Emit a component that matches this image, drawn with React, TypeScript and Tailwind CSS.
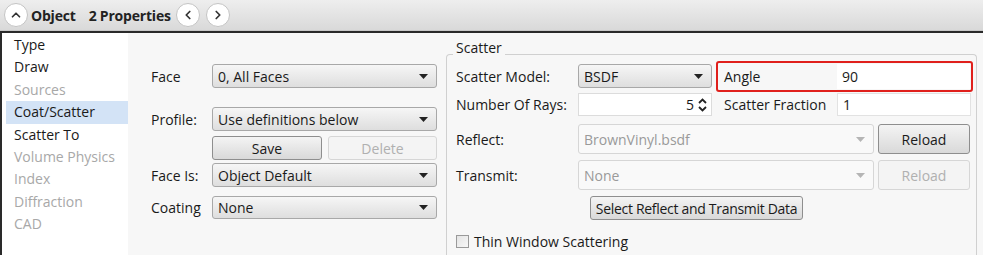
import { ChevronUp, ChevronLeft, ChevronRight } from "lucide-react";

const navItems = [
  { label: "Type", enabled: true },
  { label: "Draw", enabled: true },
  { label: "Sources", enabled: false },
  { label: "Coat/Scatter", enabled: true, selected: true },
  { label: "Scatter To", enabled: true },
  { label: "Volume Physics", enabled: false },
  { label: "Index", enabled: false },
  { label: "Diffraction", enabled: false },
  { label: "CAD", enabled: false },
];

function Caret({ disabled }: { disabled?: boolean }) {
  return (
    <svg width="9" height="5" viewBox="0 0 9 5" className="shrink-0">
      <path d="M0 0 L9 0 L4.5 5 Z" fill={disabled ? "#b5b5b5" : "#222"} />
    </svg>
  );
}

function Combo({ value, className, disabled }: { value: string; className?: string; disabled?: boolean }) {
  return (
    <div
      className={
        "flex items-center justify-between rounded-[3px] border pl-[5px] pr-[8px] " +
        (disabled
          ? "border-[#d6d6d6] bg-[#f9f9f9] text-[#9a9a9a]"
          : "border-[#a8a8a8] bg-gradient-to-b from-[#f6f6f6] to-[#dedede] text-[#1a1a1a]") +
        " " +
        (className ?? "")
      }
    >
      <span>{value}</span>
      <Caret disabled={disabled} />
    </div>
  );
}

function Btn({ label, className, disabled }: { label: string; className?: string; disabled?: boolean }) {
  return (
    <div
      className={
        "flex items-center justify-center whitespace-nowrap rounded-[3px] border " +
        (disabled
          ? "border-[#d6d6d6] bg-[#f4f4f4] text-[#b0b0b0]"
          : "border-[#8e8e8e] bg-gradient-to-b from-[#f4f4f4] to-[#d9d9d9] text-[#1a1a1a]") +
        " " +
        (className ?? "")
      }
    >
      {label}
    </div>
  );
}

function RoundBtn({ children }: { children: React.ReactNode }) {
  return (
    <div className="flex h-[24px] w-[24px] shrink-0 items-center justify-center rounded-full border border-[#c4c4c4] bg-white text-[#333]">
      {children}
    </div>
  );
}

export default function App() {
  return (
    <div
      className="flex h-[255px] w-[983px] flex-col overflow-hidden bg-white text-[14px] text-[#1a1a1a]"
      style={{ fontFamily: '"Open Sans", "Noto Sans", sans-serif' }}
    >
      <div className="flex h-[31px] shrink-0 items-center border-b border-[#c8c8c8] bg-gradient-to-b from-[#eeeeee] to-[#d9d9d9] pl-[4px]">
        <RoundBtn>
          <ChevronUp size={14} strokeWidth={3} />
        </RoundBtn>
        <span className="ml-[3px] font-bold tracking-[-0.2px] text-[#222]">Object</span>
        <span className="ml-[13px] font-bold tracking-[-0.2px] text-[#222]">2 Properties</span>
        <div className="ml-[5px] flex gap-[6px]">
          <RoundBtn>
            <ChevronLeft size={14} strokeWidth={3} />
          </RoundBtn>
          <RoundBtn>
            <ChevronRight size={14} strokeWidth={3} />
          </RoundBtn>
        </div>
      </div>

      <div className="flex flex-1 border-t-2 border-l-2 border-[#2a2a2a]">
        <div className="flex w-[126px] shrink-0 flex-col bg-white pt-[1px]">
          {navItems.map((it) => (
            <div
              key={it.label}
              className={
                "ml-[4px] h-[22.4px] pl-[8px] leading-[22px] " +
                (it.selected ? "bg-[#d3e3f6] " : "") +
                (it.enabled ? "text-[#1a1a1a]" : "text-[#a8a8a8]")
              }
            >
              {it.label}
            </div>
          ))}
        </div>

        <div className="flex flex-1 bg-[#f7f7f7]">
          <div className="flex w-[318px] shrink-0 flex-col pl-[23px] pt-[31px]">
            <div className="flex h-[24px] items-center">
              <span className="w-[61px]">Face</span>
              <Combo value="0, All Faces" className="h-[24px] w-[225px]" />
            </div>
            <div className="mt-[19px] flex h-[24px] items-center">
              <span className="w-[61px]">Profile:</span>
              <Combo value="Use definitions below" className="h-[24px] w-[225px]" />
            </div>
            <div className="mt-[5px] flex pl-[61px]">
              <Btn label="Save" className="h-[24px] w-[110px]" />
              <Btn label="Delete" disabled className="ml-[6px] h-[24px] w-[109px]" />
            </div>
            <div className="mt-[3px] flex h-[24px] items-center">
              <span className="w-[61px]">Face Is:</span>
              <Combo value="Object Default" className="h-[24px] w-[225px]" />
            </div>
            <div className="mt-[9px] flex h-[23px] items-center">
              <span className="w-[61px]">Coating</span>
              <Combo value="None" className="h-[23px] w-[225px]" />
            </div>
          </div>

          <div className="relative mt-[21px] mr-[6px] flex-1 rounded-t-[4px] border border-b-0 border-[#d0d0d0] pl-[9px] pt-[5px]">
            <span className="absolute -top-[17px] left-[6px] bg-[#f7f7f7] px-[3px] leading-[20px]">Scatter</span>
            <div className="flex h-[32px] items-center">
              <span className="w-[122px]">Scatter Model:</span>
              <Combo value="BSDF" className="h-[24px] w-[134px]" />
              <div className="ml-[4px] flex h-[31px] w-[257px] items-center rounded-[3px] border-[2px] border-[#e0201c] pl-[6px]">
                <span className="w-[113px]">Angle</span>
                <div className="mr-[1px] flex h-[25px] flex-1 items-center bg-white pl-[5px]">90</div>
              </div>
            </div>
            <div className="mt-[1px] flex h-[23px] items-center">
              <span className="w-[122px]">Number Of Rays:</span>
              <div className="flex h-[23px] w-[134px] items-center justify-end gap-[4px] border border-[#dcdcdc] bg-white pr-[4px]">
                <span>5</span>
                <svg width="9" height="14" viewBox="0 0 9 14">
                  <path d="M1 5 L4.5 1.5 L8 5" fill="none" stroke="#222" strokeWidth="1.8" />
                  <path d="M1 9 L4.5 12.5 L8 9" fill="none" stroke="#222" strokeWidth="1.8" />
                </svg>
              </div>
              <span className="ml-[12px] w-[113px]">Scatter Fraction</span>
              <div className="flex h-[23px] w-[134px] items-center border border-[#e2e2e2] bg-white pl-[5px]">1</div>
            </div>
            <div className="mt-[8px] flex h-[30px] items-center">
              <span className="w-[122px]">Reflect:</span>
              <Combo value="BrownVinyl.bsdf" disabled className="h-[30px] w-[296px]" />
              <Btn label="Reload" className="ml-[4px] h-[30px] w-[92px]" />
            </div>
            <div className="mt-[6px] flex h-[30px] items-center">
              <span className="w-[122px]">Transmit:</span>
              <Combo value="None" disabled className="h-[30px] w-[296px]" />
              <Btn label="Reload" disabled className="ml-[4px] h-[30px] w-[92px]" />
            </div>
            <div className="mt-[6px] flex pl-[134px]">
              <Btn label="Select Reflect and Transmit Data" className="h-[24px] w-[213px] tracking-[-0.3px]" />
            </div>
            <div className="mt-[11px] flex items-center">
              <div className="h-[13px] w-[13px] border border-[#9a9a9a] bg-gradient-to-br from-[#e4e4e4] to-[#f8f8f8]" />
              <span className="ml-[5px]">Thin Window Scattering</span>
            </div>
          </div>
        </div>
      </div>
    </div>
  );
}
